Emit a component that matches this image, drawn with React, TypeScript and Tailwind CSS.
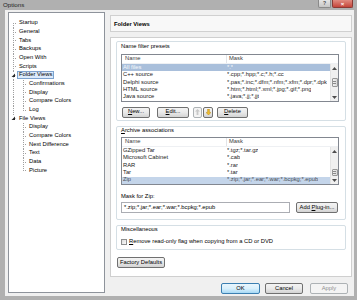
import React from "react";
import clsx from "clsx";

type TreeNode = {
  label: string;
  level: 0 | 1;
  first?: boolean;
  last?: boolean;
  expanded?: boolean;
  selected?: boolean;
  lastChild?: boolean;
  parentLast?: boolean;
};

const tree: TreeNode[] = [
  { label: "Startup", level: 0, first: true },
  { label: "General", level: 0 },
  { label: "Tabs", level: 0 },
  { label: "Backups", level: 0 },
  { label: "Open With", level: 0 },
  { label: "Scripts", level: 0 },
  { label: "Folder Views", level: 0, expanded: true, selected: true },
  { label: "Confirmations", level: 1 },
  { label: "Display", level: 1 },
  { label: "Compare Colors", level: 1 },
  { label: "Log", level: 1, lastChild: true },
  { label: "File Views", level: 0, expanded: true, last: true },
  { label: "Display", level: 1, parentLast: true },
  { label: "Compare Colors", level: 1, parentLast: true },
  { label: "Next Difference", level: 1, parentLast: true },
  { label: "Text", level: 1, parentLast: true },
  { label: "Data", level: 1, parentLast: true },
  { label: "Picture", level: 1, parentLast: true, lastChild: true },
];

const filters = [
  ["All files", "*.*"],
  ["C++ source", "*.cpp;*.hpp;*.c;*.h;*.cc"],
  ["Delphi source", "*.pas;*.inc;*.dfm;*.nfm;*.xfm;*.dpr;*.dpk"],
  ["HTML source", "*.htm;*.html;*.xml;*.jpg;*.gif;*.png"],
  ["Java source", "*.java;*.jj;*.jjt"],
];

const archives = [
  ["GZipped Tar", "*.tgz;*.tar.gz"],
  ["Microsoft Cabinet", "*.cab"],
  ["RAR", "*.rar"],
  ["Tar", "*.tar"],
  ["Zip", "*.zip;*.jar;*.ear;*.war;*.bcpkg;*.epub"],
];

const H = 8.67;
const M = 4.33;

function TreeGutter({ node }: { node: TreeNode }) {
  if (node.level === 0) {
    return (
      <svg width="8" height={H} viewBox={`0 0 8 ${H}`} className="shrink-0">
        <g stroke="#a0a0a0" strokeWidth="1" strokeDasharray="1 1" shapeRendering="crispEdges">
          <line x1="4.5" y1={node.first ? M : 0} x2="4.5" y2={node.last ? M : H} />
          <line x1="4.5" y1={M} x2="8" y2={M} />
        </g>
        {node.expanded && (
          <>
            <rect x="1.5" y="1.5" width="5" height="5" fill="#fff" />
            <path d="M6 2.6 L6 6 L2.6 6 Z" fill="#262626" />
          </>
        )}
      </svg>
    );
  }
  return (
    <svg width="18" height={H} viewBox={`0 0 18 ${H}`} className="shrink-0">
      <g stroke="#a0a0a0" strokeWidth="1" strokeDasharray="1 1" shapeRendering="crispEdges">
        {!node.parentLast && <line x1="4.5" y1="0" x2="4.5" y2={H} />}
        <line x1="14.5" y1="0" x2="14.5" y2={node.lastChild ? M : H} />
        <line x1="14.5" y1={M} x2="18" y2={M} />
      </g>
    </svg>
  );
}

function Btn({
  children,
  className,
  primary,
  disabled,
}: {
  children: React.ReactNode;
  className?: string;
  primary?: boolean;
  disabled?: boolean;
}) {
  return (
    <div
      className={clsx(
        "h-[11px] flex items-center justify-center rounded-[2px] border shrink-0",
        primary
          ? "border-[#3c7fb1] bg-linear-to-b from-[#eaf6fd] via-[#d9f0fc] to-[#a7d9f5]"
          : disabled
            ? "border-[#adb2b5] bg-[#f4f4f4] text-[#8f8f8f]"
            : "border-[#707070] bg-linear-to-b from-[#f4f4f4] via-[#e9e9e9] to-[#d3d3d3]",
        className
      )}
    >
      {children}
    </div>
  );
}

function ScrollBar({ before, thumb }: { before: string; thumb: string }) {
  return (
    <div className="w-[8px] flex flex-col bg-[#f0f0f0] border-l border-[#e3e3e3]">
      <div className="h-[8px] flex items-center justify-center">
        <svg width="5" height="3" viewBox="0 0 5 3">
          <path d="M0 3 L2.5 0 L5 3 Z" fill="#4d4d4d" />
        </svg>
      </div>
      <div className="flex-1 flex flex-col">
        <div className={before} />
        <div
          className={clsx(
            "mx-[0.5px] rounded-[1px] border border-[#979797] bg-linear-to-r from-[#f3f3f3] to-[#d8d8d8] flex flex-col items-center justify-center gap-[1px]",
            thumb
          )}
        >
          <div className="w-[3px] h-px bg-[#8a8a8a]" />
          <div className="w-[3px] h-px bg-[#8a8a8a]" />
        </div>
      </div>
      <div className="h-[8px] flex items-center justify-center">
        <svg width="5" height="3" viewBox="0 0 5 3">
          <path d="M0 0 L2.5 3 L5 0 Z" fill="#4d4d4d" />
        </svg>
      </div>
    </div>
  );
}

function ListView({
  rows,
  selected,
  selectedClass,
  scrollBefore,
  scrollThumb,
}: {
  rows: string[][];
  selected: number;
  selectedClass: string;
  scrollBefore: string;
  scrollThumb: string;
}) {
  return (
    <div className="h-[48px] border border-[#828790] bg-white flex flex-col">
      <div className="h-[9px] flex items-center text-[#3b3b3b] border-b border-[#eef0f3]">
        <div className="w-[105px] pl-[3px] border-r border-[#e2e4e8] h-full flex items-center">Name</div>
        <div className="pl-[2px]">Mask</div>
      </div>
      <div className="flex-1 flex">
        <div className="flex-1 flex flex-col overflow-hidden">
          {rows.map(([name, mask], i) => (
            <div
              key={name}
              className={clsx(
                "h-[7.4px] flex items-center whitespace-nowrap",
                i === selected ? selectedClass : "text-[#1a1a1a]"
              )}
            >
              <div className="w-[105px] pl-[1px] shrink-0">{name}</div>
              <div className="overflow-hidden">{mask}</div>
            </div>
          ))}
        </div>
        <ScrollBar before={scrollBefore} thumb={scrollThumb} />
      </div>
    </div>
  );
}

export default function App() {
  return (
    <div className="w-[357px] h-[300px] bg-[#b0b0b0] flex flex-col overflow-hidden font-['Liberation_Sans',Arial,sans-serif] text-[5.8px] leading-none text-black">
      {/* Title bar */}
      <div className="h-[10px] flex items-start">
        <div className="pl-[3px] pt-[2px] text-[6.2px] text-[#1e1e1e]">Options</div>
        <div className="flex-1" />
        <div className="w-[13px] h-[8px] border border-t-0 border-[#8a8a8a] rounded-b-[2px] bg-linear-to-b from-[#e6e6e6] to-[#c6c6c6] flex items-center justify-center text-[5px] text-[#444] font-bold">
          ?
        </div>
        <div className="ml-[1px] mr-[4px] w-[21px] h-[8px] border border-t-0 border-[#8b3a34] rounded-b-[2px] bg-linear-to-b from-[#e08a80] to-[#c4443a] flex items-center justify-center text-[6px] text-white font-bold">
          ×
        </div>
      </div>

      <div className="flex-1 flex pl-[5px] pr-[3px] pb-[4px]">
        <div className="flex-1 flex bg-[#f0f0f0] pl-[3px] pr-[2px]">
          {/* Tree */}
          <div className="mt-[2px] mb-[3px] w-[97px] border border-[#8e939b] bg-white pt-[6px] flex flex-col">
            {tree.map((n, i) => (
              <div key={i} className="h-[8.67px] flex items-center">
                <TreeGutter node={n} />
                <span
                  className={clsx(
                    "h-[7.6px] px-[1px] border flex items-center whitespace-nowrap",
                    n.selected ? "bg-[#dcebfc] border-[#7da2ce]" : "border-transparent"
                  )}
                >
                  {n.label}
                </span>
              </div>
            ))}
          </div>

          {/* Right side */}
          <div className="ml-[5px] flex-1 flex flex-col pt-[5px] pb-[2px]">
            <div className="h-[17px] border border-[#d0d0d0] bg-[#f8f8f8] flex items-center pl-[3px] pt-[2px] font-bold">
              Folder Views
            </div>

            <div className="mt-[5px] h-[240px] border border-[#cfcfcf] bg-white px-[5px] pt-[3px] flex flex-col">
              {/* Name filter presets */}
              <div className="border border-[#d5dfe5] rounded-[2px] pt-[1px] pb-[3px] px-[4px] pr-[6px] flex flex-col">
                <div className="h-[7px] flex items-center">Name filter presets</div>
                <div className="mt-[4px]">
                  <ListView
                    rows={filters}
                    selected={0}
                    selectedClass="bg-[#a9bfdb] text-[#f7f9fb]"
                    scrollBefore="h-[6px]"
                    scrollThumb="h-[9px]"
                  />
                </div>
                <div className="mt-[5px] h-[10px] flex items-center">
                  <Btn className="ml-[1px] w-[28px] h-[10px]">
                    <span><u>N</u>ew...</span>
                  </Btn>
                  <Btn className="ml-[7px] w-[32px] h-[10px]">
                    <span><u>E</u>dit...</span>
                  </Btn>
                  <Btn disabled className="ml-[4px] w-[9px] h-[10px]">
                    <svg width="5" height="6" viewBox="0 0 5 6">
                      <path d="M2.5 0 L5 2.6 L3.4 2.6 L3.4 6 L1.6 6 L1.6 2.6 L0 2.6 Z" fill="#c8c8c8" />
                    </svg>
                  </Btn>
                  <Btn className="ml-[1px] w-[10px] h-[10px]">
                    <svg width="5" height="6" viewBox="0 0 5 6">
                      <path
                        d="M2.5 6 L5 3.4 L3.4 3.4 L3.4 0 L1.6 0 L1.6 3.4 L0 3.4 Z"
                        fill="#f1bf2e"
                        stroke="#b8861a"
                        strokeWidth="0.5"
                      />
                    </svg>
                  </Btn>
                  <Btn className="ml-[4px] w-[31px] h-[10px]">
                    <span><u>D</u>elete</span>
                  </Btn>
                </div>
              </div>

              {/* Archive associations */}
              <div className="mt-[5px] border border-[#d5dfe5] rounded-[2px] pb-[6px] px-[4px] pr-[6px] flex flex-col">
                <div className="h-[7px] flex items-center">
                  <span><u>A</u>rchive associations</span>
                </div>
                <div className="mt-[3px]">
                  <ListView
                    rows={archives}
                    selected={4}
                    selectedClass="bg-[#c4d5ea] text-[#4a4f57]"
                    scrollBefore="h-[14px]"
                    scrollThumb="h-[7px]"
                  />
                </div>
                <div className="mt-[8px] h-[7px] flex items-center">Mask for Zip:</div>
                <div className="mt-[2px] flex">
                  <div className="w-[169px] h-[11px] border border-[#abadb3] bg-white flex items-center pl-[2px] whitespace-nowrap">
                    *.zip;*.jar;*.ear;*.war;*.bcpkg;*.epub
                  </div>
                  <Btn className="ml-[6px] w-[42px]">
                    <span>Add <u>P</u>lug-in...</span>
                  </Btn>
                </div>
              </div>

              {/* Miscellaneous */}
              <div className="mt-[5px] border border-[#d5dfe5] rounded-[2px] pb-[3px] px-[4px] flex flex-col">
                <div className="h-[7px] flex items-center">Miscellaneous</div>
                <div className="mt-[5px] h-[8px] flex items-center">
                  <div className="w-[6px] h-[6px] border border-[#8e8f8f] bg-linear-to-br from-[#dcdcdc] to-[#fbfbfb]" />
                  <span className="ml-[2px] whitespace-nowrap">
                    <u>R</u>emove read-only flag when copying from a CD or DVD
                  </span>
                </div>
              </div>

              <Btn className="mt-[7px] ml-[1px] w-[48px]">Factory Defaults</Btn>
            </div>

            {/* Dialog buttons */}
            <div className="mt-[6px] flex justify-end pr-[4px]">
              <Btn primary className="w-[39px]">OK</Btn>
              <Btn className="ml-[5px] w-[38px]">Cancel</Btn>
              <Btn disabled className="ml-[7px] w-[38px]">Apply</Btn>
            </div>
          </div>
        </div>
      </div>
    </div>
  );
}
